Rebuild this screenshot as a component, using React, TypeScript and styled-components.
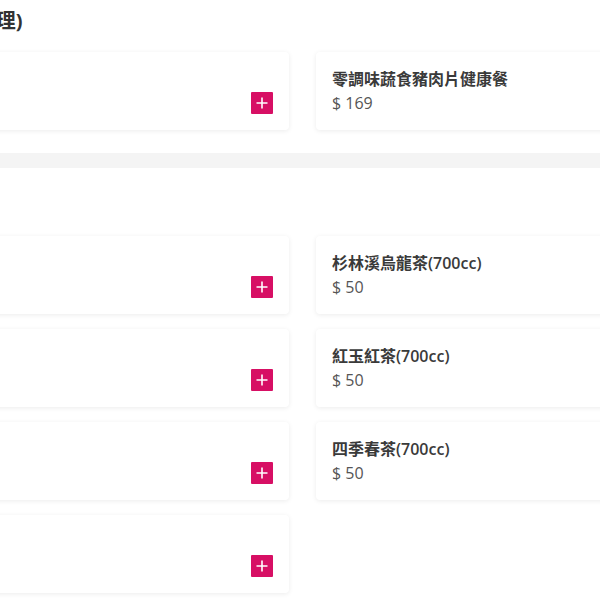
import React from 'react';
import styled, { createGlobalStyle } from 'styled-components';

const GlobalStyle = createGlobalStyle`
    html, body {
        margin: 0;
        padding: 0;
        background: #fff;
    }
    body {
        font-family: 'Open Sans', 'Noto Sans CJK TC', sans-serif;
        color: #333;
    }
`;

const Viewport = styled.div`
    width: 600px;
    height: 600px;
    overflow: hidden;
`;

const Menu = styled.div`
    width: 907px;
    margin: -16px 0 0 -151px;
`;

const Section = styled.section`
    padding: 23px 0 23px;
`;

const Divider = styled.div`
    height: 15px;
    margin: 0 -200px;
    background: #f4f4f4;
`;

const SectionTitle = styled.h2`
    margin: 0 0 17px;
    font-size: 20px;
    line-height: 28px;
    font-weight: 700;
    color: #333;
`;

const Grid = styled.div`
    display: grid;
    grid-template-columns: 440px 440px;
    column-gap: 27px;
    row-gap: 15px;
`;

const Card = styled.div`
    display: flex;
    justify-content: space-between;
    align-items: flex-end;
    box-sizing: border-box;
    padding: 16px 16px 16px 16px;
    background: #fff;
    border-radius: 4px;
    box-shadow: 0 1px 5px rgba(0, 0, 0, 0.08);
`;

const Info = styled.div`
    display: flex;
    flex-direction: column;
    gap: 2px;
`;

const Name = styled.div`
    font-size: 16px;
    line-height: 22px;
    font-weight: 600;
    color: #3a3a3a;
`;

const Price = styled.div`
    font-size: 16px;
    line-height: 22px;
    color: #555;
`;

const AddButton = styled.button`
    display: flex;
    align-items: center;
    justify-content: center;
    width: 22px;
    height: 22px;
    padding: 0;
    border: none;
    border-radius: 1px;
    background: #d70f64;
    cursor: pointer;
`;

const PlusIcon = () => (
    <svg width="12" height="12" viewBox="0 0 12 12">
        <path d="M6 0.5v11M0.5 6h11" stroke="#fff" strokeWidth="1.6" fill="none" />
    </svg>
);

type Item = { name: string; price: number };

const sections: { title: string; items: Item[] }[] = [
    {
        title: '招牌便當(健康料理)',
        items: [
            { name: '香煎雞腿健康餐', price: 159 },
            { name: '零調味蔬食豬肉片健康餐', price: 169 },
        ],
    },
    {
        title: '飲品',
        items: [
            { name: '茉莉綠茶(700cc)', price: 40 },
            { name: '杉林溪烏龍茶(700cc)', price: 50 },
            { name: '金萱烏龍(700cc)', price: 50 },
            { name: '紅玉紅茶(700cc)', price: 50 },
            { name: '冬瓜檸檬(700cc)', price: 50 },
            { name: '四季春茶(700cc)', price: 50 },
            { name: '檸檬綠(700cc)', price: 50 },
        ],
    },
];

const MenuCard = ({ item }: { item: Item }) => (
    <Card>
        <Info>
            <Name>{item.name}</Name>
            <Price>$ {item.price}</Price>
        </Info>
        <AddButton aria-label="add">
            <PlusIcon />
        </AddButton>
    </Card>
);

export default function App() {
    return (
        <>
            <GlobalStyle />
            <Viewport>
                <Menu>
                    {sections.map((section, i) => (
                        <React.Fragment key={section.title}>
                            {i > 0 && <Divider />}
                            <Section>
                                <SectionTitle>{section.title}</SectionTitle>
                                <Grid>
                                    {section.items.map((item) => (
                                        <MenuCard key={item.name} item={item} />
                                    ))}
                                </Grid>
                            </Section>
                        </React.Fragment>
                    ))}
                </Menu>
            </Viewport>
        </>
    );
}
